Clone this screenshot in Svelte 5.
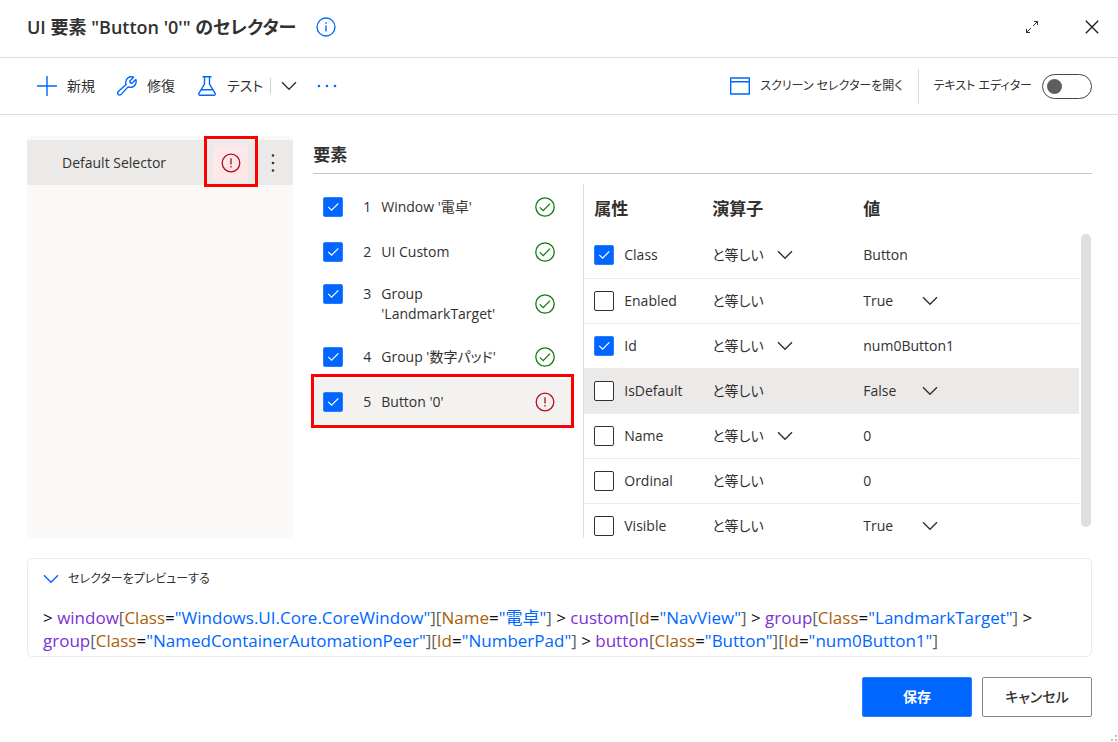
<script lang="ts">
	interface ElementItem {
		id: number;
		name: string;
		checked: boolean;
		valid: boolean;
	}

	interface Attribute {
		name: string;
		checked: boolean;
		operators: string[];
		value: string;
		options?: string[];
	}

	let elements = $state<ElementItem[]>([
		{ id: 1, name: "Window '電卓'", checked: true, valid: true },
		{ id: 2, name: 'UI Custom', checked: true, valid: true },
		{ id: 3, name: "Group 'LandmarkTarget'", checked: true, valid: true },
		{ id: 4, name: "Group '数字パッド'", checked: true, valid: true },
		{ id: 5, name: "Button '0'", checked: true, valid: false }
	]);

	const equalOnly = ['と等しい'];
	const allOperators = ['と等しい', 'と等しくない', '次を含む'];

	let attributes = $state<Attribute[]>([
		{ name: 'Class', checked: true, operators: allOperators, value: 'Button' },
		{ name: 'Enabled', checked: false, operators: equalOnly, value: 'True', options: ['True', 'False'] },
		{ name: 'Id', checked: true, operators: allOperators, value: 'num0Button1' },
		{ name: 'IsDefault', checked: false, operators: equalOnly, value: 'False', options: ['True', 'False'] },
		{ name: 'Name', checked: false, operators: allOperators, value: '0' },
		{ name: 'Ordinal', checked: false, operators: equalOnly, value: '0' },
		{ name: 'Visible', checked: false, operators: equalOnly, value: 'True', options: ['True', 'False'] }
	]);

	const preview = [
		{ tag: 'window', attrs: [['Class', 'Windows.UI.Core.CoreWindow'], ['Name', '電卓']] },
		{ tag: 'custom', attrs: [['Id', 'NavView']] },
		{ tag: 'group', attrs: [['Class', 'LandmarkTarget']] },
		{ tag: 'group', attrs: [['Class', 'NamedContainerAutomationPeer'], ['Id', 'NumberPad']] },
		{ tag: 'button', attrs: [['Class', 'Button'], ['Id', 'num0Button1']] }
	];

	let selectedElement = $state(5);
	let activeAttribute = $state('IsDefault');
	let textEditor = $state(false);
	let previewOpen = $state(true);
</script>

{#snippet chevron()}
	<svg class="chevron" viewBox="0 0 16 10" width="16" height="10" fill="none" stroke="currentColor" stroke-width="1.4">
		<path d="M1 1.2 8 8.2 15 1.2" />
	</svg>
{/snippet}

{#snippet errorIcon()}
	<svg viewBox="0 0 20 20" width="20" height="20" fill="none" stroke="#b10e1c" stroke-width="1.3">
		<circle cx="10" cy="10" r="8.8" />
		<path d="M10 5.2v6.4M10 13.1v1.5" />
	</svg>
{/snippet}

{#snippet okIcon()}
	<svg viewBox="0 0 20 20" width="20" height="20" fill="none" stroke="#107c10" stroke-width="1.3">
		<circle cx="10" cy="10" r="9.2" />
		<path d="M4.8 10.4 8.2 13.6 15 6.6" />
	</svg>
{/snippet}

{#snippet tick()}
	<svg class="tick" viewBox="0 0 20 20" width="20" height="20" fill="none" stroke="#fff" stroke-width="1.2">
		<path d="M5.2 9.8 8.6 13.2 15.4 6.4" />
	</svg>
{/snippet}

<div class="dialog">
	<header class="titlebar">
		<h1>UI 要素 "Button '0'" のセレクター</h1>
		<button class="icon-btn info" aria-label="情報">
			<svg viewBox="0 0 20 20" width="20" height="20" fill="none" stroke="#0066ff" stroke-width="1.3">
				<circle cx="10" cy="10" r="9" />
				<path d="M10 8.4v6M10 5.2v1.6" stroke-width="1.4" />
			</svg>
		</button>
		<div class="window-actions">
			<button class="icon-btn" aria-label="最大化">
				<svg viewBox="0 0 14 14" width="14" height="14" fill="none" stroke="#333" stroke-width="1">
					<path d="M8 6 12.5 1.5M9 1.5h3.5V5M6 8 1.5 12.5M1.5 9v3.5H5" />
				</svg>
			</button>
			<button class="icon-btn" aria-label="閉じる">
				<svg viewBox="0 0 14 14" width="14" height="14" fill="none" stroke="#222" stroke-width="1.4">
					<path d="M.8.8 13.2 13.2M13.2.8.8 13.2" />
				</svg>
			</button>
		</div>
	</header>

	<div class="toolbar">
		<button class="tool">
			<svg viewBox="0 0 20 20" width="20" height="20" fill="none" stroke="#0066ff" stroke-width="1.4">
				<path d="M10 0v20M0 10h20" />
			</svg>
			新規
		</button>
		<button class="tool">
			<svg viewBox="0 0 20 20" width="20" height="20" fill="none" stroke="#0066ff" stroke-width="1.4" stroke-linejoin="round">
				<path d="M16.6 1.2 12.8 5l.4 1.8 1.8.4 3.8-3.8c1.2 3.4-.8 8-5.4 8-.9 0-1.6-.2-2.3-.5l-6.9 7.5c-.9 1-2.2.9-3 .1s-.9-2.1.1-3l7.8-6.9c-.3-.7-.4-1.4-.4-2.2C8.7 2.1 12.8-.4 16.6 1.2Z" />
			</svg>
			修復
		</button>
		<button class="tool">
			<svg viewBox="0 0 20 20" width="20" height="20" fill="none" stroke="#0066ff" stroke-width="1.4" stroke-linejoin="round">
				<path d="M5.5.8h9M7.5.8v7.4L2 17.2c-.6 1 0 2 1 2h14c1 0 1.6-1 1-2L12.5 8.2V.8M4.2 13.8h11.6" />
			</svg>
			テスト
		</button>
		<button class="icon-btn split" aria-label="テスト オプション">{@render chevron()}</button>
		<button class="icon-btn more" aria-label="その他">
			<svg viewBox="0 0 20 4" width="20" height="4" fill="#0066ff">
				<circle cx="2" cy="2" r="1.3" /><circle cx="10" cy="2" r="1.3" /><circle cx="18" cy="2" r="1.3" />
			</svg>
		</button>
		<button class="tool open-screen">
			<svg viewBox="0 0 20 18" width="20" height="18" fill="none" stroke="#0066ff" stroke-width="1.4">
				<path d="M.7 1h18.6v16H.7ZM.7 4.8h18.6" />
			</svg>
			スクリーン セレクターを開く
		</button>
		<label class="editor-switch">
			テキスト エディター
			<input type="checkbox" role="switch" bind:checked={textEditor} />
		</label>
	</div>

	<main class="workspace">
		<aside class="selectors">
			<div class="selector">
				<span class="selector-name">Default Selector</span>
				<span class="selector-status">{@render errorIcon()}</span>
				<button class="icon-btn" aria-label="セレクターのメニュー">
					<svg viewBox="0 0 4 20" width="4" height="20" fill="#333">
						<circle cx="2" cy="2.5" r="1.3" /><circle cx="2" cy="10" r="1.3" /><circle cx="2" cy="17.5" r="1.3" />
					</svg>
				</button>
			</div>
		</aside>

		<section class="editor">
			<h2>要素</h2>
			<div class="panes">
				<ul class="elements">
					{#each elements as item (item.id)}
						<li class:selected={item.id === selectedElement}>
							<label class="element">
								<span class="check">
									<input type="checkbox" bind:checked={item.checked} onchange={() => (selectedElement = item.id)} />
									{@render tick()}
								</span>
								<span class="number">{item.id}</span>
								<span class="element-name">{item.name}</span>
							</label>
							{#if item.valid}
								{@render okIcon()}
							{:else}
								{@render errorIcon()}
							{/if}
						</li>
					{/each}
				</ul>

				<div class="attributes">
					<table>
						<thead>
							<tr>
								<th class="col-name">属性</th>
								<th class="col-operator">演算子</th>
								<th>値</th>
							</tr>
						</thead>
						<tbody>
							{#each attributes as attr (attr.name)}
								<tr class:active={attr.name === activeAttribute} onfocusin={() => (activeAttribute = attr.name)}>
									<td>
										<label class="attribute">
											<span class="check">
												<input type="checkbox" bind:checked={attr.checked} />
												{@render tick()}
											</span>
											{attr.name}
										</label>
									</td>
									<td>
										{#if attr.operators.length > 1}
											<span class="dropdown">
												<select class="operator" aria-label="{attr.name} 演算子">
													{#each attr.operators as operator}
														<option>{operator}</option>
													{/each}
												</select>
												{@render chevron()}
											</span>
										{:else}
											{attr.operators[0]}
										{/if}
									</td>
									<td>
										{#if attr.options}
											<span class="dropdown">
												<select aria-label="{attr.name} 値" bind:value={attr.value}>
													{#each attr.options as option}
														<option>{option}</option>
													{/each}
												</select>
												{@render chevron()}
											</span>
										{:else}
											<input class="value" type="text" aria-label="{attr.name} 値" bind:value={attr.value} />
										{/if}
									</td>
								</tr>
							{/each}
						</tbody>
					</table>
					<div class="scrollbar"><div class="thumb"></div></div>
				</div>
			</div>
		</section>
	</main>

	<section class="preview">
		<button class="preview-toggle" aria-expanded={previewOpen} onclick={() => (previewOpen = !previewOpen)}>
			{@render chevron()}
			セレクターをプレビューする
		</button>
		{#if previewOpen}
			<p class="code">
				{#each preview as node}
					{'> '}<span class="tag">{node.tag}</span>{#each node.attrs as [key, value]}<span class="bracket">[</span><span class="key">{key}</span>=<span class="string">"{value}"</span><span class="bracket">]</span>{/each}{' '}
				{/each}
			</p>
		{/if}
	</section>

	<footer>
		<button class="primary">保存</button>
		<button class="secondary">キャンセル</button>
	</footer>

	<svg class="grip" viewBox="0 0 10 8" width="10" height="8" fill="#b8bcc8">
		<path d="M7 1h2v2H7zM3 5h2v2H3zM7 5h2v2H7z" />
	</svg>
</div>

<style>
	:global(body) {
		background: #fff;
	}

	.dialog {
		position: relative;
		display: flex;
		flex-direction: column;
		box-sizing: border-box;
		height: 100vh;
		padding-bottom: 25px;
		overflow: hidden;
		font-family: 'Open Sans', 'Noto Sans CJK JP', sans-serif;
		font-feature-settings: 'palt';
		font-size: 14px;
		line-height: 20px;
		color: #323130;
	}

	button,
	input,
	select {
		margin: 0;
		padding: 0;
		border: 0;
		background: none;
		font: inherit;
		font-feature-settings: inherit;
		color: inherit;
	}

	svg {
		display: block;
		flex: none;
	}

	h1,
	h2 {
		margin: 0;
		font-weight: 600;
	}

	.icon-btn {
		display: flex;
		align-items: center;
		justify-content: center;
	}

	/* Title bar */
	.titlebar {
		display: flex;
		align-items: center;
		height: 57px;
		flex: none;
		box-sizing: border-box;
		padding: 0 19px 3px 27px;
		gap: 20px;
	}

	h1 {
		font-size: 18px;
		line-height: 24px;
	}

	.window-actions {
		display: flex;
		gap: 46px;
		margin-left: auto;
	}

	/* Toolbar */
	.toolbar {
		display: flex;
		align-items: center;
		height: 58px;
		flex: none;
		box-sizing: border-box;
		padding: 0 26px 0 37px;
		border-top: 1px solid #dcdcdc;
		border-bottom: 1px solid #dcdcdc;
	}

	.tool {
		display: flex;
		align-items: center;
		gap: 10px;
		margin-right: 22px;
		white-space: nowrap;
	}

	.tool:nth-child(3) {
		margin-right: 7px;
	}

	.split {
		height: 16px;
		padding-left: 10px;
		border-left: 1px solid #d2d0ce;
	}

	.more {
		margin-left: 20px;
	}

	.open-screen {
		margin-left: auto;
		margin-right: 15px;
	}

	.open-screen,
	.editor-switch,
	.preview-toggle {
		font-size: 12px;
	}

	.editor-switch {
		display: flex;
		align-items: center;
		gap: 10px;
		height: 35px;
		padding-left: 15px;
		border-left: 1px solid #dcdcdc;
		white-space: nowrap;
	}

	.editor-switch input {
		appearance: none;
		display: flex;
		align-items: center;
		box-sizing: border-box;
		width: 50px;
		height: 25px;
		padding: 0 4px;
		border: 1px solid #484644;
		border-radius: 13px;
	}

	.editor-switch input::before {
		content: '';
		width: 15px;
		height: 15px;
		border-radius: 50%;
		background: #605e5c;
	}

	.editor-switch input:checked {
		justify-content: flex-end;
	}

	/* Workspace */
	.workspace {
		display: flex;
		flex: 1;
		min-height: 0;
		gap: 20px;
		padding: 21px 26px 20px 27px;
	}

	.selectors {
		flex: 0 0 25%;
		box-sizing: border-box;
		padding-top: 4px;
		border-radius: 5px;
		background: #faf9f8;
	}

	.selector {
		display: flex;
		align-items: center;
		height: 45px;
		padding: 0 18px 0 35px;
		background: #ebeae8;
	}

	.selector-name {
		flex: 1;
	}

	.selector-status {
		position: relative;
		display: grid;
		place-items: center;
		width: 35px;
		height: 35px;
		margin-right: 23px;
		border-radius: 2px;
		background: #fde7e9;
	}

	.selector-status::after {
		content: '';
		position: absolute;
		inset: -9px -10px -7px -9px;
		border: 3px solid #f00;
	}

	.editor {
		display: flex;
		flex-direction: column;
		flex: 1;
		min-width: 0;
	}

	h2 {
		padding: 7px 0 6px;
		border-bottom: 1px solid #c8c6c4;
		font-size: 17px;
		line-height: 24px;
	}

	.panes {
		display: flex;
		flex: 1;
		min-height: 0;
		gap: 12px;
		padding-top: 10px;
	}

	.elements {
		flex: 0 0 258px;
		margin: 0;
		padding: 0;
		list-style: none;
	}

	.elements li {
		position: relative;
		display: flex;
		align-items: center;
		justify-content: space-between;
		box-sizing: border-box;
		min-height: 45px;
		padding: 10px 16px 10px 10px;
	}

	.elements li.selected {
		background: #f3f2f1;
	}

	.elements li.selected::after {
		content: '';
		position: absolute;
		inset: -5px -3px -4px -2px;
		border: 3px solid #f00;
		pointer-events: none;
	}

	.element {
		display: flex;
		align-items: flex-start;
	}

	.number {
		width: 18px;
		margin-left: 20px;
	}

	.element-name {
		width: 130px;
	}

	.check {
		display: grid;
		flex: none;
	}

	.check input,
	.check .tick {
		grid-area: 1 / 1;
	}

	.check input {
		appearance: none;
		box-sizing: border-box;
		width: 20px;
		height: 20px;
		border: 1px solid #323130;
		border-radius: 2px;
		background: #fff;
	}

	.check input:checked {
		border-color: #2b7fff;
		background: #0066ff;
	}

	.tick {
		visibility: hidden;
		pointer-events: none;
	}

	.check input:checked + .tick {
		visibility: visible;
	}

	/* Attribute table */
	.attributes {
		display: flex;
		flex: 1;
		align-items: stretch;
		min-width: 0;
		overflow: hidden;
		border-left: 1px solid #e1dfdd;
	}

	table {
		flex: 1;
		width: 100%;
		height: max-content;
		border-collapse: collapse;
		table-layout: fixed;
	}

	th {
		height: 49px;
		box-sizing: border-box;
		padding: 0;
		font-size: 17px;
		font-weight: 600;
		text-align: left;
	}

	td {
		box-sizing: border-box;
		height: 45px;
		padding: 0;
		border-bottom: 1px solid #edebe9;
	}

	th:first-child,
	td:first-child {
		padding-left: 10px;
	}

	.col-name {
		width: 128px;
	}

	.col-operator {
		width: 151px;
	}

	tr.active {
		background: #ebeae8;
	}

	.attribute {
		display: flex;
		align-items: center;
		gap: 10px;
	}

	.dropdown {
		display: inline-grid;
		align-items: center;
		grid-template-columns: auto 16px;
	}

	select {
		appearance: none;
		grid-area: 1 / 1 / 2 / 3;
		width: 75px;
		height: 20px;
	}

	select.operator {
		width: 81px;
	}

	.dropdown .chevron {
		grid-area: 1 / 2;
		pointer-events: none;
	}

	.value {
		width: 100%;
		height: 20px;
	}

	.scrollbar {
		flex: 0 0 10px;
		margin: 50px 1px 11px 2px;
	}

	.thumb {
		height: 100%;
		border-radius: 5px;
		background: #e1dfdd;
	}

	/* Preview */
	.preview {
		flex: none;
		margin: 0 26px 0 27px;
		padding: 10px 15px 4px;
		border: 1px solid #edebe9;
		border-radius: 5px;
	}

	.preview-toggle {
		display: flex;
		align-items: center;
		gap: 9px;
	}

	.preview-toggle .chevron {
		color: #0066ff;
	}

	.code {
		margin: 17px 0 0;
		font-size: 17px;
		line-height: 23px;
		color: #111;
	}

	.tag {
		color: #7a30d8;
	}

	.key {
		color: #a85f0a;
	}

	.string {
		color: #0066ff;
	}

	.bracket {
		color: #605e5c;
	}

	/* Footer */
	footer {
		display: flex;
		flex: none;
		justify-content: flex-end;
		gap: 10px;
		margin: 20px 26px 0;
	}

	footer button {
		width: 110px;
		height: 40px;
		border: 1px solid #8a8886;
		border-radius: 2px;
		font-weight: 500;
	}

	footer .primary {
		border-color: #2b7fff;
		background: #0066ff;
		font-weight: 700;
		color: #fff;
	}

	.grip {
		position: absolute;
		right: 0;
		bottom: 0;
	}
</style>
